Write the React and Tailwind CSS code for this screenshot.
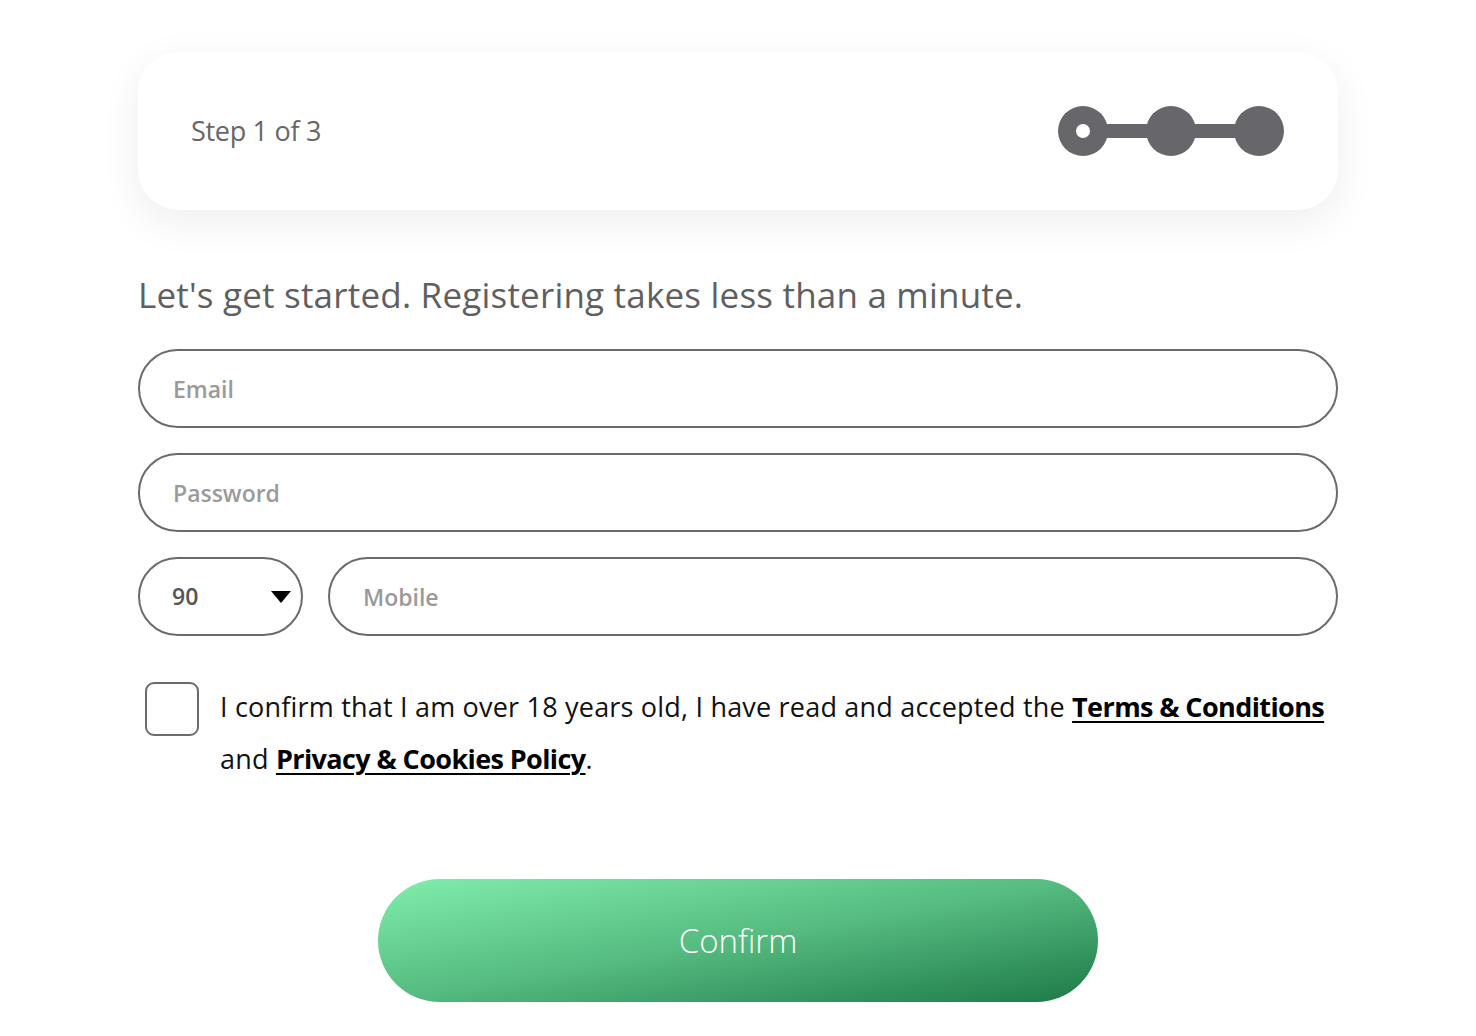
import React, { useState } from "react";

const font = { fontFamily: '"Open Sans", "Noto Sans", sans-serif' };

const StepDots = () => (
    <svg width="226" height="50" viewBox="0 0 226 50">
        <rect x="25" y="18" width="176" height="14" fill="#67666b" />
        <circle cx="25" cy="25" r="25" fill="#67666b" />
        <circle cx="25" cy="25" r="7" fill="#ffffff" />
        <circle cx="113" cy="25" r="25" fill="#67666b" />
        <circle cx="201" cy="25" r="25" fill="#67666b" />
    </svg>
);

const App = () => {
    const [email, setEmail] = useState("");
    const [password, setPassword] = useState("");
    const [mobile, setMobile] = useState("");
    const [agree, setAgree] = useState(false);

    return (
        <div className="min-h-screen bg-white" style={font}>
            <div className="w-[1200px] mx-auto pt-[52px]">
                {/* Step card */}
                <div className="h-[158px] bg-white rounded-[40px] shadow-[0_12px_40px_rgba(0,0,0,0.07)] flex items-center justify-between pl-[53px] pr-[54px]">
                    <span className="text-[27px] text-[#666666] tracking-[-0.3px]">Step 1 of 3</span>
                    <StepDots />
                </div>

                {/* Heading */}
                <h1 className="mt-[63px] text-[35px] leading-[44px] text-[#5f5f5f] tracking-[0.2px]">
                    Let's get started. Registering takes less than a minute.
                </h1>

                <form className="mt-[32px] flex flex-col gap-[25px]" onSubmit={(e) => e.preventDefault()}>
                    <input
                        value={email}
                        onChange={(e) => setEmail(e.target.value)}
                        type="email"
                        placeholder="Email"
                        className="h-[79px] w-full rounded-full border-2 border-[#6b6b6b] px-[33px] text-[23px] font-semibold text-[#555] placeholder:text-[#9a9a9a] outline-none"
                    />
                    <input
                        value={password}
                        onChange={(e) => setPassword(e.target.value)}
                        type="password"
                        placeholder="Password"
                        className="h-[79px] w-full rounded-full border-2 border-[#6b6b6b] px-[33px] text-[23px] font-semibold text-[#555] placeholder:text-[#9a9a9a] outline-none"
                    />
                    <div className="flex gap-[25px]">
                        <div className="h-[79px] w-[165px] shrink-0 rounded-full border-2 border-[#6b6b6b] flex items-center justify-between pl-[32px] pr-[10px]">
                            <span className="text-[23px] font-semibold text-[#555]">90</span>
                            <svg width="20" height="12" viewBox="0 0 20 12">
                                <path d="M0 0 L20 0 L10 12 Z" fill="#000" />
                            </svg>
                        </div>
                        <input
                            value={mobile}
                            onChange={(e) => setMobile(e.target.value)}
                            type="tel"
                            placeholder="Mobile"
                            className="h-[79px] flex-1 rounded-full border-2 border-[#6b6b6b] px-[33px] text-[23px] font-semibold text-[#555] placeholder:text-[#9a9a9a] outline-none"
                        />
                    </div>

                    {/* Agreement */}
                    <div className="mt-[20px] flex items-start pl-[7px]">
                        <button
                            type="button"
                            onClick={() => setAgree(!agree)}
                            className="mt-[1px] w-[54px] h-[54px] shrink-0 rounded-[9px] border-2 border-[#6b6b6b] bg-white"
                        >
                            {agree && <span className="text-[28px] text-[#1e7c4a]">✓</span>}
                        </button>
                        <p className="ml-[21px] text-[27px] leading-[52px] text-[#111] tracking-[0.2px]">
                            I confirm that I am over 18 years old, I have read and accepted the{" "}
                            <a href="#" className="whitespace-nowrap font-bold tracking-[-0.6px] underline underline-offset-4 decoration-2 text-black">Terms &amp; Conditions</a>{" "}
                            and{" "}
                            <a href="#" className="whitespace-nowrap font-bold tracking-[-0.6px] underline underline-offset-4 decoration-2 text-black">Privacy &amp; Cookies Policy</a>.
                        </p>
                    </div>

                    <div className="mt-[69px] flex justify-center">
                        <button
                            type="submit"
                            className="w-[720px] h-[123px] rounded-full bg-linear-to-br from-[#80eeac] via-[#55bb80] to-[#1c7a47] text-white text-[33px] font-light"
                        >
                            Confirm
                        </button>
                    </div>
                </form>
            </div>
        </div>
    );
};

export default App;
